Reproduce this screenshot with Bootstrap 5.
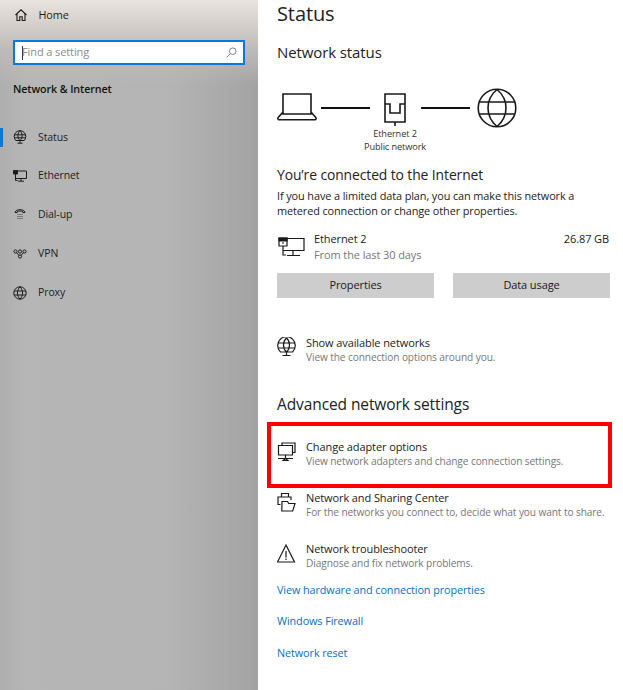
<!DOCTYPE html>
<html lang="en">
<head>
<meta charset="UTF-8">
<title>Status - Settings</title>
<link href="https://cdn.jsdelivr.net/npm/bootstrap@5.3.0/dist/css/bootstrap.min.css" rel="stylesheet">
<style>
html, body { height: 690px; overflow: hidden; }
body { font-family: "Open Sans", "Noto Sans", sans-serif; font-size: 11px; color: #1a1a1a; background: #fff; letter-spacing: -.1px; }
svg { fill: none; stroke: currentColor; flex: none; display: block; }
.shell { height: 690px; }
.side-pane { width: 258px; height: 690px; flex: none; color: #1c1c1c;
  background: linear-gradient(180deg, #e9e3df 0, #d8d3cf 20px, #bebcba 48px, rgba(182,182,182,0) 85px), linear-gradient(90deg, #aeaeae 0, #b6b6b6 10%, #b4b4b4 66%, #a3a3a3 100%); }
.home-row { height: 30px; padding-left: 15px; gap: 11.500px; font-size: 10.800px; }
.find-box { margin: 10px 13px 0; height: 25px; border: 2px solid #0a78d8; background: #fff; padding: 0 6px 0 7px; color: #8b8b8b; }
.find-box .caret-bar { width: 1px; height: 14px; background: #333; margin-right: -1px; }
.side-title { margin: 16px 0 0 13px; height: 16px; line-height: 16px; font-weight: 600; color: #111; font-size: 10.700px; }
.side-nav { margin-top: 21px; }
.side-item { height: 38.800px; padding-left: 13px; gap: 11px; position: relative; font-size: 10.500px; }
.side-item svg { width: 14px; height: 14px; stroke-width: 1; }
.active-bar { position: absolute; left: 0; top: 10px; width: 3px; height: 19px; background: #0a78d8; }
.main-pane { padding-left: 19px; width: 365px; }
.page-title { font-size: 20px; line-height: 24px; font-weight: 400; margin: 2px 0 0; color: #222; }
.net-title { font-size: 15px; line-height: 20px; font-weight: 400; margin: 16px 0 0; color: #222; }
.net-map { height: 70px; margin-top: 26px; }
.net-map .wire { width: 49px; height: 1.500px; background: #111; margin-top: 19px; margin-left: 4px; }
.net-map .wire.after-node { margin-left: 1px; }
.net-node { width: 50px; }
.net-caption { font-size: 9.200px; line-height: 13px; color: #333; text-align: center; white-space: nowrap; margin-top: 1px; }
.laptop-ico { margin-top: 5px; }
.node-ico { margin-top: 5px; }
.globe-ico { margin-left: 7px; }
.sub-head { font-size: 13.900px; line-height: 20px; font-weight: 400; margin: 7px 0 0; color: #222; }
.sub-copy { line-height: 15px; margin: 3px 0 0; color: #222; font-size: 10.900px; }
.usage-row { margin-top: 13px; height: 36px; width: 332px; line-height: 16px; }
.usage-row svg { width: 28px; height: 24px; stroke-width: 1.200px; margin-top: 5px; }
.usage-text { margin-left: 9px; }
.muted-line { color: #777; }
.grey-btn { width: 157px; height: 25px; border-radius: 0; border: 0; background: #cdcdcd; color: #1a1a1a; font-size: 11px; padding: 0; letter-spacing: -.1px; }
.btn-row { margin-top: 6px; gap: 19px; }
.opt-row { gap: 10px; }
.opt-row svg { width: 19px; height: 20px; stroke-width: 1.200px; margin-top: 2px; }
.opt-row .opt-name { line-height: 15px; color: #222; }
.opt-row .opt-note { line-height: 15px; color: #777; font-size: 10.150px; white-space: nowrap; }
.first-opt { margin-top: 37px; }
.next-opt { margin-top: 21px; }
.adv-head { font-size: 15.500px; line-height: 20px; font-weight: 400; margin: 29px 0 0; color: #222; }
.adv-block { margin-top: 25px; }
.red-frame { position: absolute; left: -10px; top: -17px; width: 345px; height: 66px; border: 4px solid #f00; pointer-events: none; }
.link-line { display: block; color: #0a6fc4; text-decoration: none; line-height: 15px; font-size: 10.850px; margin-top: 16px; }
.link-line.first-link { margin-top: 11px; }
.link-line.last-link { margin-top: 17px; }
</style>
</head>
<body>
<div class="shell d-flex">
  <aside class="side-pane">
    <div class="home-row d-flex align-items-center">
      <svg width="12" height="12" viewBox="0 0 12 12" stroke-width="1.100"><path d="M.5 6 6 .8 11.500 6M2 4.800v6.700h2.800V7.800h2.400v3.700H10V4.800"/></svg>
      <span>Home</span>
    </div>
    <div class="find-box d-flex align-items-center">
      <span class="caret-bar"></span><span class="flex-grow-1">Find a setting</span>
      <svg width="11" height="11" viewBox="0 0 12 12" stroke-width="1" class="text-secondary"><circle cx="7.400" cy="4.600" r="3.600"/><path d="M4.800 7.200.8 11.200"/></svg>
    </div>
    <div class="side-title">Network &amp; Internet</div>
    <nav class="side-nav">
      <div class="side-item d-flex align-items-center"><span class="active-bar"></span>
        <svg viewBox="0 0 14 14"><path d="M2.800 10.500A5.800 5.800 0 1 1 11.200 10.500H2.800ZM1.200 4.800h11.600M1.200 7.800h11.600M7 .7c-2.800 2.600-2.800 7.200 0 9.800M7 .7c2.800 2.600 2.800 7.200 0 9.800M7 10.500v2.500M4.500 13.200h5"/></svg>
        <span>Status</span></div>
      <div class="side-item d-flex align-items-center">
        <svg viewBox="0 0 14 14"><path d="M4 2h9.500v7.500H2.500M2.500 5v6.500h2M8 9.500v2.500M5 12.200h6"/><path d="M.5 1.500h4v3.500h-4z" fill="currentColor"/></svg>
        <span>Ethernet</span></div>
      <div class="side-item d-flex align-items-center">
        <svg viewBox="0 0 14 14"><path d="M2 4.500C2 .8 12 .8 12 4.500H9.800V3.600C8.500 2.800 5.500 2.800 4.200 3.600V4.500Z"/><path d="M4.500 6.500h1M6.500 6.500h1M8.500 6.500h1M4.500 8.500h1M6.500 8.500h1M8.500 8.500h1M4.500 10.500h1M6.500 10.500h1M8.500 10.500h1" stroke-width=".8"/></svg>
        <span>Dial-up</span></div>
      <div class="side-item d-flex align-items-center">
        <svg viewBox="0 0 14 14"><circle cx="2.500" cy="4.500" r="1.600"/><circle cx="7" cy="4.500" r="1.600"/><circle cx="11.500" cy="4.500" r="1.600"/><circle cx="7" cy="9.500" r="1.600"/><path d="M3.600 5.800 5.900 8.300M10.400 5.800 8.100 8.300"/></svg>
        <span>VPN</span></div>
      <div class="side-item d-flex align-items-center">
        <svg viewBox="0 0 14 14" stroke-width="1.100"><circle cx="7" cy="7" r="6.200"/><path d="M1 5h12M1 9h12M7 .8c-3.400 3.800-3.400 8.600 0 12.400M7 .8c3.400 3.800 3.400 8.600 0 12.400"/></svg>
        <span>Proxy</span></div>
    </nav>
  </aside>
  <main class="main-pane">
    <h1 class="page-title">Status</h1>
    <h2 class="net-title">Network status</h2>
    <div class="net-map d-flex align-items-start">
      <svg width="40" height="28" viewBox="0 0 40 28" stroke-width="1.600" class="laptop-ico"><path d="M6 1h28v20H6zM6 19 1.200 24.500a1.300 1.300 0 0 0 1 2.200h35.600a1.300 1.300 0 0 0 1-2.200L34 19"/></svg>
      <span class="wire"></span>
      <div class="net-node d-flex flex-column align-items-center">
        <svg width="22" height="33" viewBox="0 0 22 33" stroke-width="1.600" class="node-ico"><path d="M1 1h20v28H1zM11 29v4M1 11h5v9h10v-9h5"/></svg>
        <div class="net-caption">Ethernet 2<br>Public network</div>
      </div>
      <span class="wire after-node"></span>
      <svg width="40" height="40" viewBox="0 0 40 40" stroke-width="1.600" class="globe-ico"><circle cx="20" cy="20" r="18.800"/><path d="M2.500 14h35M2.500 26h35M20 1.500c-12 10-12 27 0 37M20 1.500c12 10 12 27 0 37"/></svg>
    </div>
    <h3 class="sub-head">You’re connected to the Internet</h3>
    <p class="sub-copy">If you have a limited data plan, you can make this network a<br>metered connection or change other properties.</p>
    <div class="usage-row d-flex">
      <svg viewBox="0 0 28 24"><path d="M10 2.500h17v12H6M6 10v9h3M16 14.500v5M10 19.500h13"/><path d="M2 2h8v8H2z"/><path d="M2 2h8v3H2zM5 7h2" fill="currentColor"/></svg>
      <div class="usage-text flex-grow-1"><div>Ethernet 2</div><div class="muted-line">From the last 30 days</div></div>
      <div>26.87 GB</div>
    </div>
    <div class="btn-row d-flex">
      <button class="btn grey-btn" type="button">Properties</button>
      <button class="btn grey-btn" type="button">Data usage</button>
    </div>
    <div class="opt-row first-opt d-flex">
      <svg viewBox="0 0 19 20"><path d="M3.500 15A8.800 8.800 0 1 1 15.500 15H3.500ZM1.200 6h16.600M1.200 11h16.600M9.500 1C5.500 4.500 5.500 11.500 9.500 15M9.500 1c4 3.500 4 10.500 0 14M9.500 15v3M5.500 18.500h8"/></svg>
      <div><div class="opt-name">Show available networks</div><div class="opt-note">View the connection options around you.</div></div>
    </div>
    <h2 class="adv-head">Advanced network settings</h2>
    <div class="adv-block position-relative">
      <div class="opt-row d-flex">
        <svg viewBox="0 0 19 20"><path d="M5 4.500V2h13v9.500h-2.500M1.500 4.500h14V14h-14zM8.500 14v3.500M1 17.500h15M6 19.500h5l-2.500-2z"/></svg>
        <div><div class="opt-name">Change adapter options</div><div class="opt-note">View network adapters and change connection settings.</div></div>
      </div>
      <div class="red-frame"></div>
    </div>
    <div class="opt-row next-opt d-flex">
      <svg viewBox="0 0 19 20"><path d="M4.500 5V1.500h7V5M3.500 12.500H1V5h13v3M5 9.500h5.500l1.200 2h6.300l-2.300 7.500H4.800z"/></svg>
      <div><div class="opt-name">Network and Sharing Center</div><div class="opt-note">For the networks you connect to, decide what you want to share.</div></div>
    </div>
    <div class="opt-row next-opt d-flex">
      <svg viewBox="0 0 19 20"><path d="M9 2 17.500 19H.5ZM9 8v6.500M9 15.500v1.500"/></svg>
      <div><div class="opt-name">Network troubleshooter</div><div class="opt-note">Diagnose and fix network problems.</div></div>
    </div>
    <a class="link-line first-link" href="#">View hardware and connection properties</a>
    <a class="link-line" href="#">Windows Firewall</a>
    <a class="link-line last-link" href="#">Network reset</a>
  </main>
</div>
<script src="https://cdn.jsdelivr.net/npm/bootstrap@5.3.0/dist/js/bootstrap.bundle.min.js"></script>
</body>
</html>
